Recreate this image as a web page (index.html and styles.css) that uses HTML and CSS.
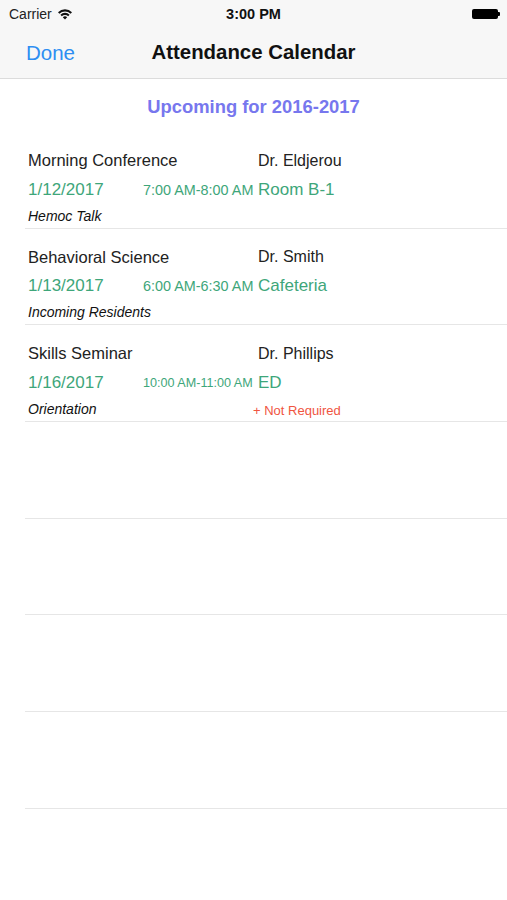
FILE: index.html
```html
<!DOCTYPE html>
<html lang="en">
  <head>
    <meta charset="UTF-8" />
    <meta name="viewport" content="width=device-width, initial-scale=1.0" />
    <title>Attendance Calendar</title>
    <link rel="stylesheet" href="styles.css">
  </head>
  <body>
    <div class="top">
      <div class="statusbar">
        <div class="carrier">
          Carrier
          <svg class="wifi" width="16" height="12" viewBox="0 0 16 12">
            <path d="M1 4.2a10 10 0 0 1 14 0l-1.4 1.5a8 8 0 0 0-11.2 0z" fill="#111" />
            <path d="M3.4 6.7a6.6 6.6 0 0 1 9.2 0l-1.4 1.5a4.6 4.6 0 0 0-6.4 0z" fill="#111" />
            <path d="M5.8 9.2a3.2 3.2 0 0 1 4.4 0L8 11.6z" fill="#111" />
          </svg>
        </div>
        <div class="clock">3:00 PM</div>
        <div class="battery"><span class="cell"></span><span class="nub"></span></div>
      </div>
      <div class="navbar">
        <span class="done">Done</span>
        <span class="navtitle">Attendance Calendar</span>
      </div>
    </div>

    <div class="heading">Upcoming for 2016-2017</div>

    <div class="list">
      <div class="row">
        <span class="name">Morning Conference</span>
        <span class="doctor">Dr. Eldjerou</span>
        <span class="date">1/12/2017</span>
        <span class="time">7:00 AM-8:00 AM</span>
        <span class="place">Room B-1</span>
        <span class="topic">Hemoc Talk</span>
      </div>
      <div class="row">
        <span class="name">Behavioral Science</span>
        <span class="doctor">Dr. Smith</span>
        <span class="date">1/13/2017</span>
        <span class="time">6:00 AM-6:30 AM</span>
        <span class="place">Cafeteria</span>
        <span class="topic">Incoming Residents</span>
      </div>
      <div class="row">
        <span class="name">Skills Seminar</span>
        <span class="doctor">Dr. Phillips</span>
        <span class="date">1/16/2017</span>
        <span class="time small">10:00 AM-11:00 AM</span>
        <span class="place">ED</span>
        <span class="topic">Orientation</span>
        <span class="notreq">+ Not Required</span>
      </div>
      <div class="row"></div>
      <div class="row"></div>
      <div class="row"></div>
      <div class="row"></div>
    </div>
  </body>
</html>
```

FILE: styles.css
```css
body {
  margin: 0;
  width: 507px;
  height: 900px;
  background: #ffffff;
  font-family: "Liberation Sans", Arial, sans-serif;
  color: #1a1a1a;
  overflow: hidden;
}
.top {
  background: #f7f7f7;
  border-bottom: 1px solid #dcdcdc;
}
.statusbar {
  height: 27px;
  display: flex;
  align-items: center;
  justify-content: space-between;
  padding: 0 7px 0 9px;
  font-size: 14px;
  position: relative;
}
.carrier {
  display: flex;
  align-items: center;
  gap: 5px;
  color: #222;
}
.clock {
  position: absolute;
  left: 0;
  right: 0;
  text-align: center;
  font-weight: bold;
  font-size: 14.5px;
  color: #111;
}
.battery {
  display: flex;
  align-items: center;
}
.cell {
  display: block;
  width: 26px;
  height: 10px;
  background: #000;
  border-radius: 2px;
}
.nub {
  display: block;
  width: 2px;
  height: 4px;
  background: #000;
  border-radius: 0 1px 1px 0;
}
.navbar {
  height: 51px;
  display: flex;
  align-items: center;
  position: relative;
  padding-left: 26px;
}
.done {
  color: #2d8ef2;
  font-size: 20.5px;
}
.navtitle {
  position: absolute;
  left: 0;
  right: 0;
  text-align: center;
  font-size: 20.4px;
  font-weight: bold;
  color: #111;
  pointer-events: none;
}
.heading {
  height: 53px;
  line-height: 55px;
  text-align: center;
  font-weight: bold;
  font-size: 18.4px;
  color: #7777ee;
}
.list {
  margin-left: 25px;
}
.row {
  box-sizing: border-box;
  height: 96.67px;
  border-bottom: 1px solid #e6e6e6;
  padding: 18px 0 0 3px;
  display: grid;
  grid-template-columns: 115px 115px 1fr;
  grid-template-rows: 21px 37px 15px;
  align-items: center;
}
.name,
.doctor {
  font-size: 16px;
  color: #222;
}
.name {
  grid-column: 1 / 3;
  font-size: 16.5px;
}
.doctor {
  grid-column: 3;
}
.date,
.place {
  font-size: 17px;
  color: #3ea67a;
}
.time {
  font-size: 14.4px;
  color: #3ea67a;
}
.time.small {
  font-size: 12.6px;
}
.topic {
  grid-column: 1 / 3;
  font-size: 14px;
  font-style: italic;
  color: #111;
}
.notreq {
  grid-column: 3;
  margin-left: -5px;
  margin-top: 4px;
  font-size: 13px;
  color: #f0553f;
}
```
